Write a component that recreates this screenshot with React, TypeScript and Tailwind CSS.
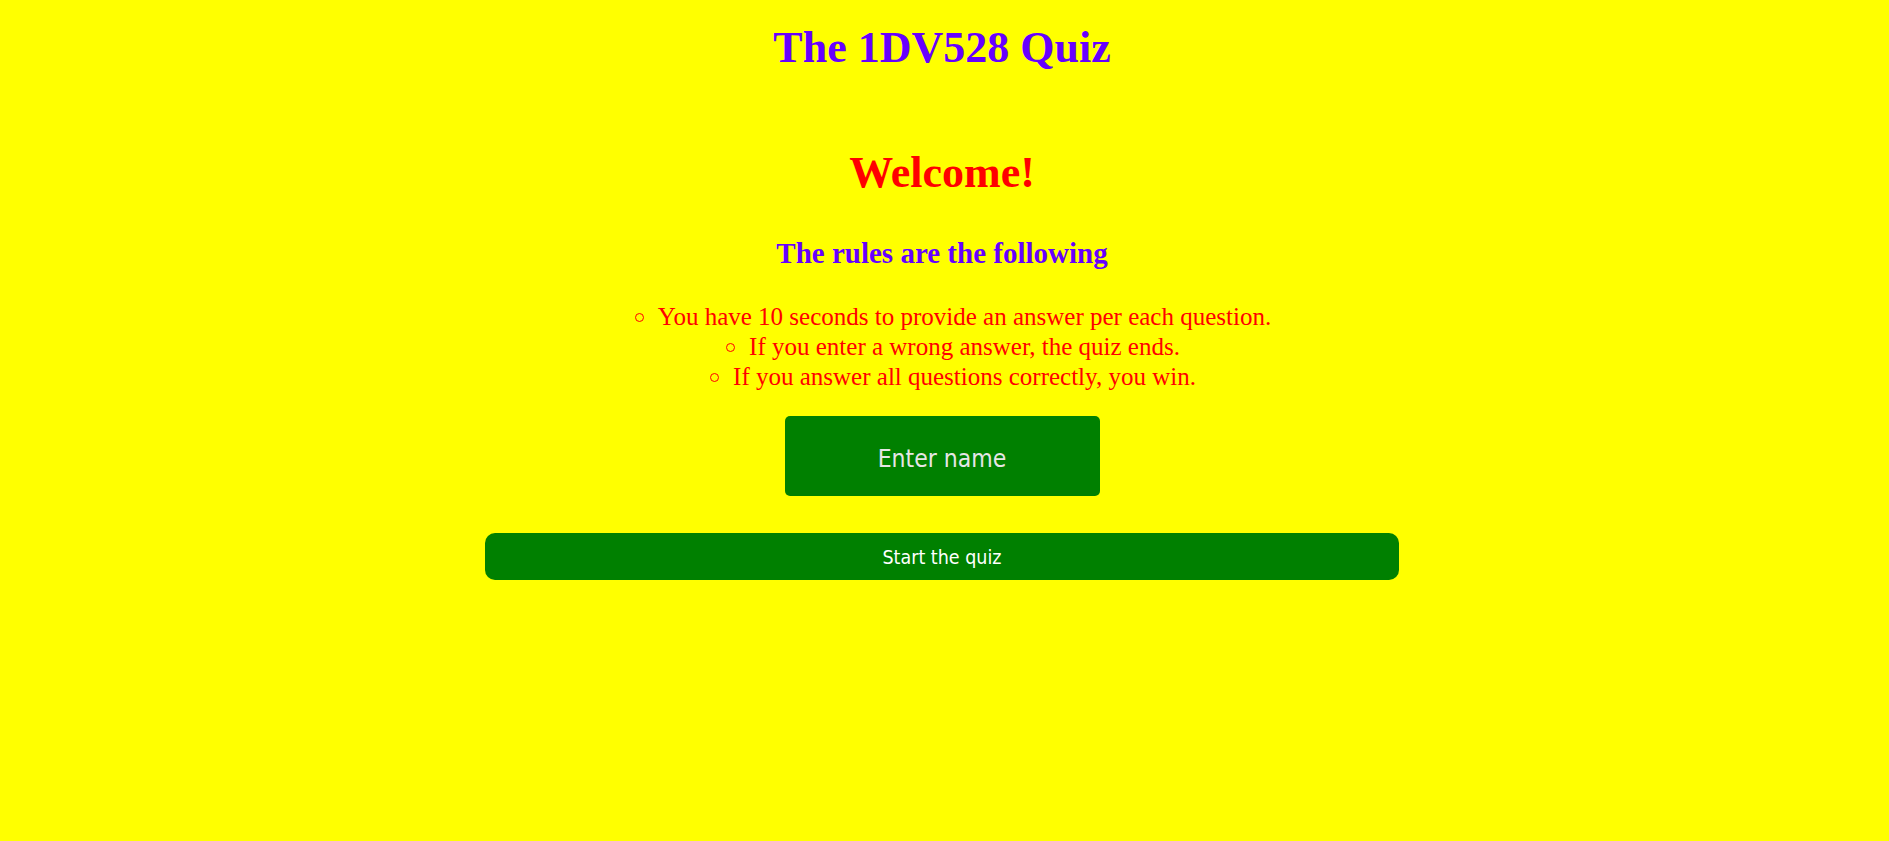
import React, { useState } from 'react';

const rules = [
  "You have 10 seconds to provide an answer per each question.",
  "If you enter a wrong answer, the quiz ends.",
  "If you answer all questions correctly, you win.",
];

const App: React.FC = () => {
  const [name, setName] = useState('');

  return (
    <div className="min-h-[841px] w-full pr-[5px] bg-[#ffff00] flex flex-col items-center font-['Liberation_Serif','Times_New_Roman',serif]">
      <h1 className="mt-[23px] text-[44px] leading-[50px] font-bold text-[#6600ff]">The 1DV528 Quiz</h1>

      <h2 className="mt-[75px] text-[44px] leading-[50px] font-bold text-[#ff0000]">Welcome!</h2>

      <h3 className="mt-[37px] text-[29px] leading-[36px] font-bold text-[#6600ff]">The rules are the following</h3>

      <ul className="mt-[31px] pl-[22px] list-none text-center text-[25px] leading-[30px] text-[#ff0000]">
        {rules.map(rule => (
          <li key={rule}>
            <span className="inline-block w-[9px] h-[9px] mr-[14px] mb-[3px] rounded-full border border-[#ff0000]" />
            {rule}
          </li>
        ))}
      </ul>

      <input
        type="text"
        value={name}
        onChange={e => setName(e.target.value)}
        placeholder="Enter name"
        className="mt-[24px] w-[315px] h-[80px] pt-[4px] rounded-[5px] bg-[#008000] text-center text-white text-[24.5px] placeholder:text-[#e6e6e6] outline-none font-['DejaVu_Sans_Condensed','DejaVu_Sans',sans-serif]"
      />

      <button
        type="button"
        className="mt-[37px] w-[914px] h-[47px] pt-[3px] rounded-[10px] bg-[#008000] text-white text-[19.5px] font-['DejaVu_Sans_Condensed','DejaVu_Sans',sans-serif]"
      >
        Start the quiz
      </button>
    </div>
  );
};

export default App;
